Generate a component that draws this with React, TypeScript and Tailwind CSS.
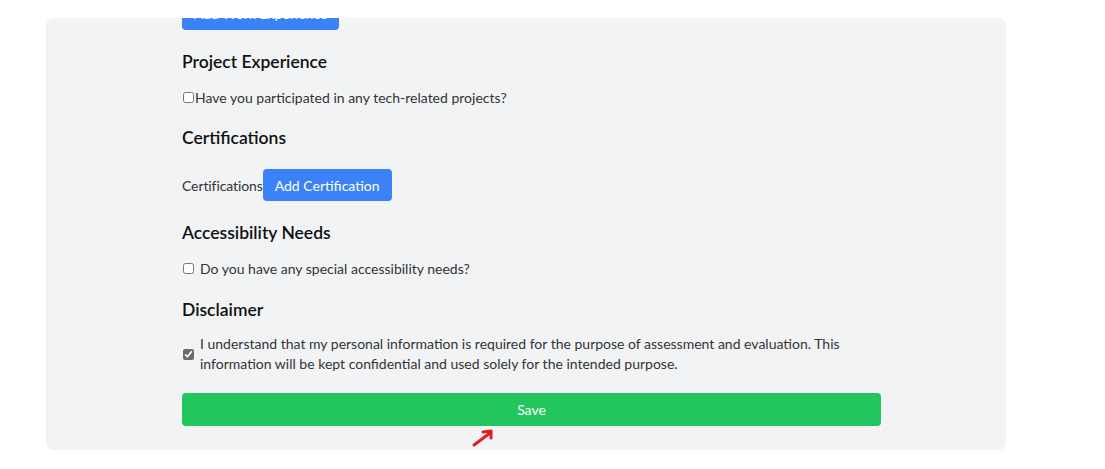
export default function App() {
  return (
    <div
      className="h-[469px] w-full overflow-hidden bg-white pt-[18px] pl-[46px]"
      style={{ fontFamily: 'Lato, "Noto Sans", sans-serif' }}
    >
      <div className="relative w-[960px] h-[432px] overflow-hidden rounded-lg bg-[#f2f3f5] pl-[136px]">
        <div className="w-[699px]">
          {/* Work experience button, scrolled partly out of view */}
          <button className="-mt-[22px] block h-[34px] w-[157px] rounded bg-[#3b82f6] text-[14px] text-white">
            Add Work Experience
          </button>

          {/* Project experience */}
          <h3 className="mt-[18px] h-[28px] text-[17.5px] leading-[28px] font-semibold text-[#111]">
            Project Experience
          </h3>
          <label className="mt-[11px] flex h-[20px] items-center text-[14px] text-[#333]">
            <input type="checkbox" className="ml-px h-[11px] w-[11px]" />
            <span className="ml-px">Have you participated in any tech-related projects?</span>
          </label>

          {/* Certifications */}
          <h3 className="mt-[17px] h-[28px] text-[17.5px] leading-[28px] font-semibold text-[#111]">
            Certifications
          </h3>
          <div className="mt-[17px] flex h-[32px] items-center text-[14px] text-[#333]">
            <span className="tracking-[-0.1px]">Certifications</span>
            <button className="h-[32px] rounded bg-[#3b82f6] px-[12px] text-[14px] text-white">
              Add Certification
            </button>
          </div>

          {/* Accessibility */}
          <h3 className="mt-[18px] h-[28px] text-[17.5px] leading-[28px] font-semibold text-[#111]">
            Accessibility Needs
          </h3>
          <label className="mt-[11px] flex h-[20px] items-center gap-[6px] text-[14px] text-[#333]">
            <input type="checkbox" className="ml-px h-[11px] w-[11px]" />
            <span>Do you have any special accessibility needs?</span>
          </label>

          {/* Disclaimer */}
          <h3 className="mt-[18px] h-[28px] text-[17.5px] leading-[28px] font-semibold text-[#111]">
            Disclaimer
          </h3>
          <label className="mt-[10px] flex items-center gap-[6px] text-[14px] leading-[20px] text-[#333]">
            <input
              type="checkbox"
              defaultChecked
              className="ml-px h-[11px] w-[11px] shrink-0 accent-[#6b6b6b]"
            />
            <span className="w-[670px]">
              I understand that my personal information is required for the purpose of assessment and
              evaluation. This information will be kept confidential and used solely for the intended
              purpose.
            </span>
          </label>

          <button className="mt-[19px] block h-[33px] w-full rounded bg-[#22c55e] text-[14px] text-white">
            Save
          </button>

          {/* Red annotation arrow */}
          <svg width="26" height="20" viewBox="0 0 26 20" className="ml-[289px] mt-[2px]">
            <path
              d="M3 17 L19 5"
              stroke="#e11d1d"
              strokeWidth="3"
              strokeLinecap="round"
              fill="none"
            />
            <path
              d="M12 4 L20 3 L20 10"
              stroke="#e11d1d"
              strokeWidth="3"
              strokeLinecap="round"
              strokeLinejoin="round"
              fill="none"
            />
          </svg>
        </div>
      </div>
    </div>
  )
}
